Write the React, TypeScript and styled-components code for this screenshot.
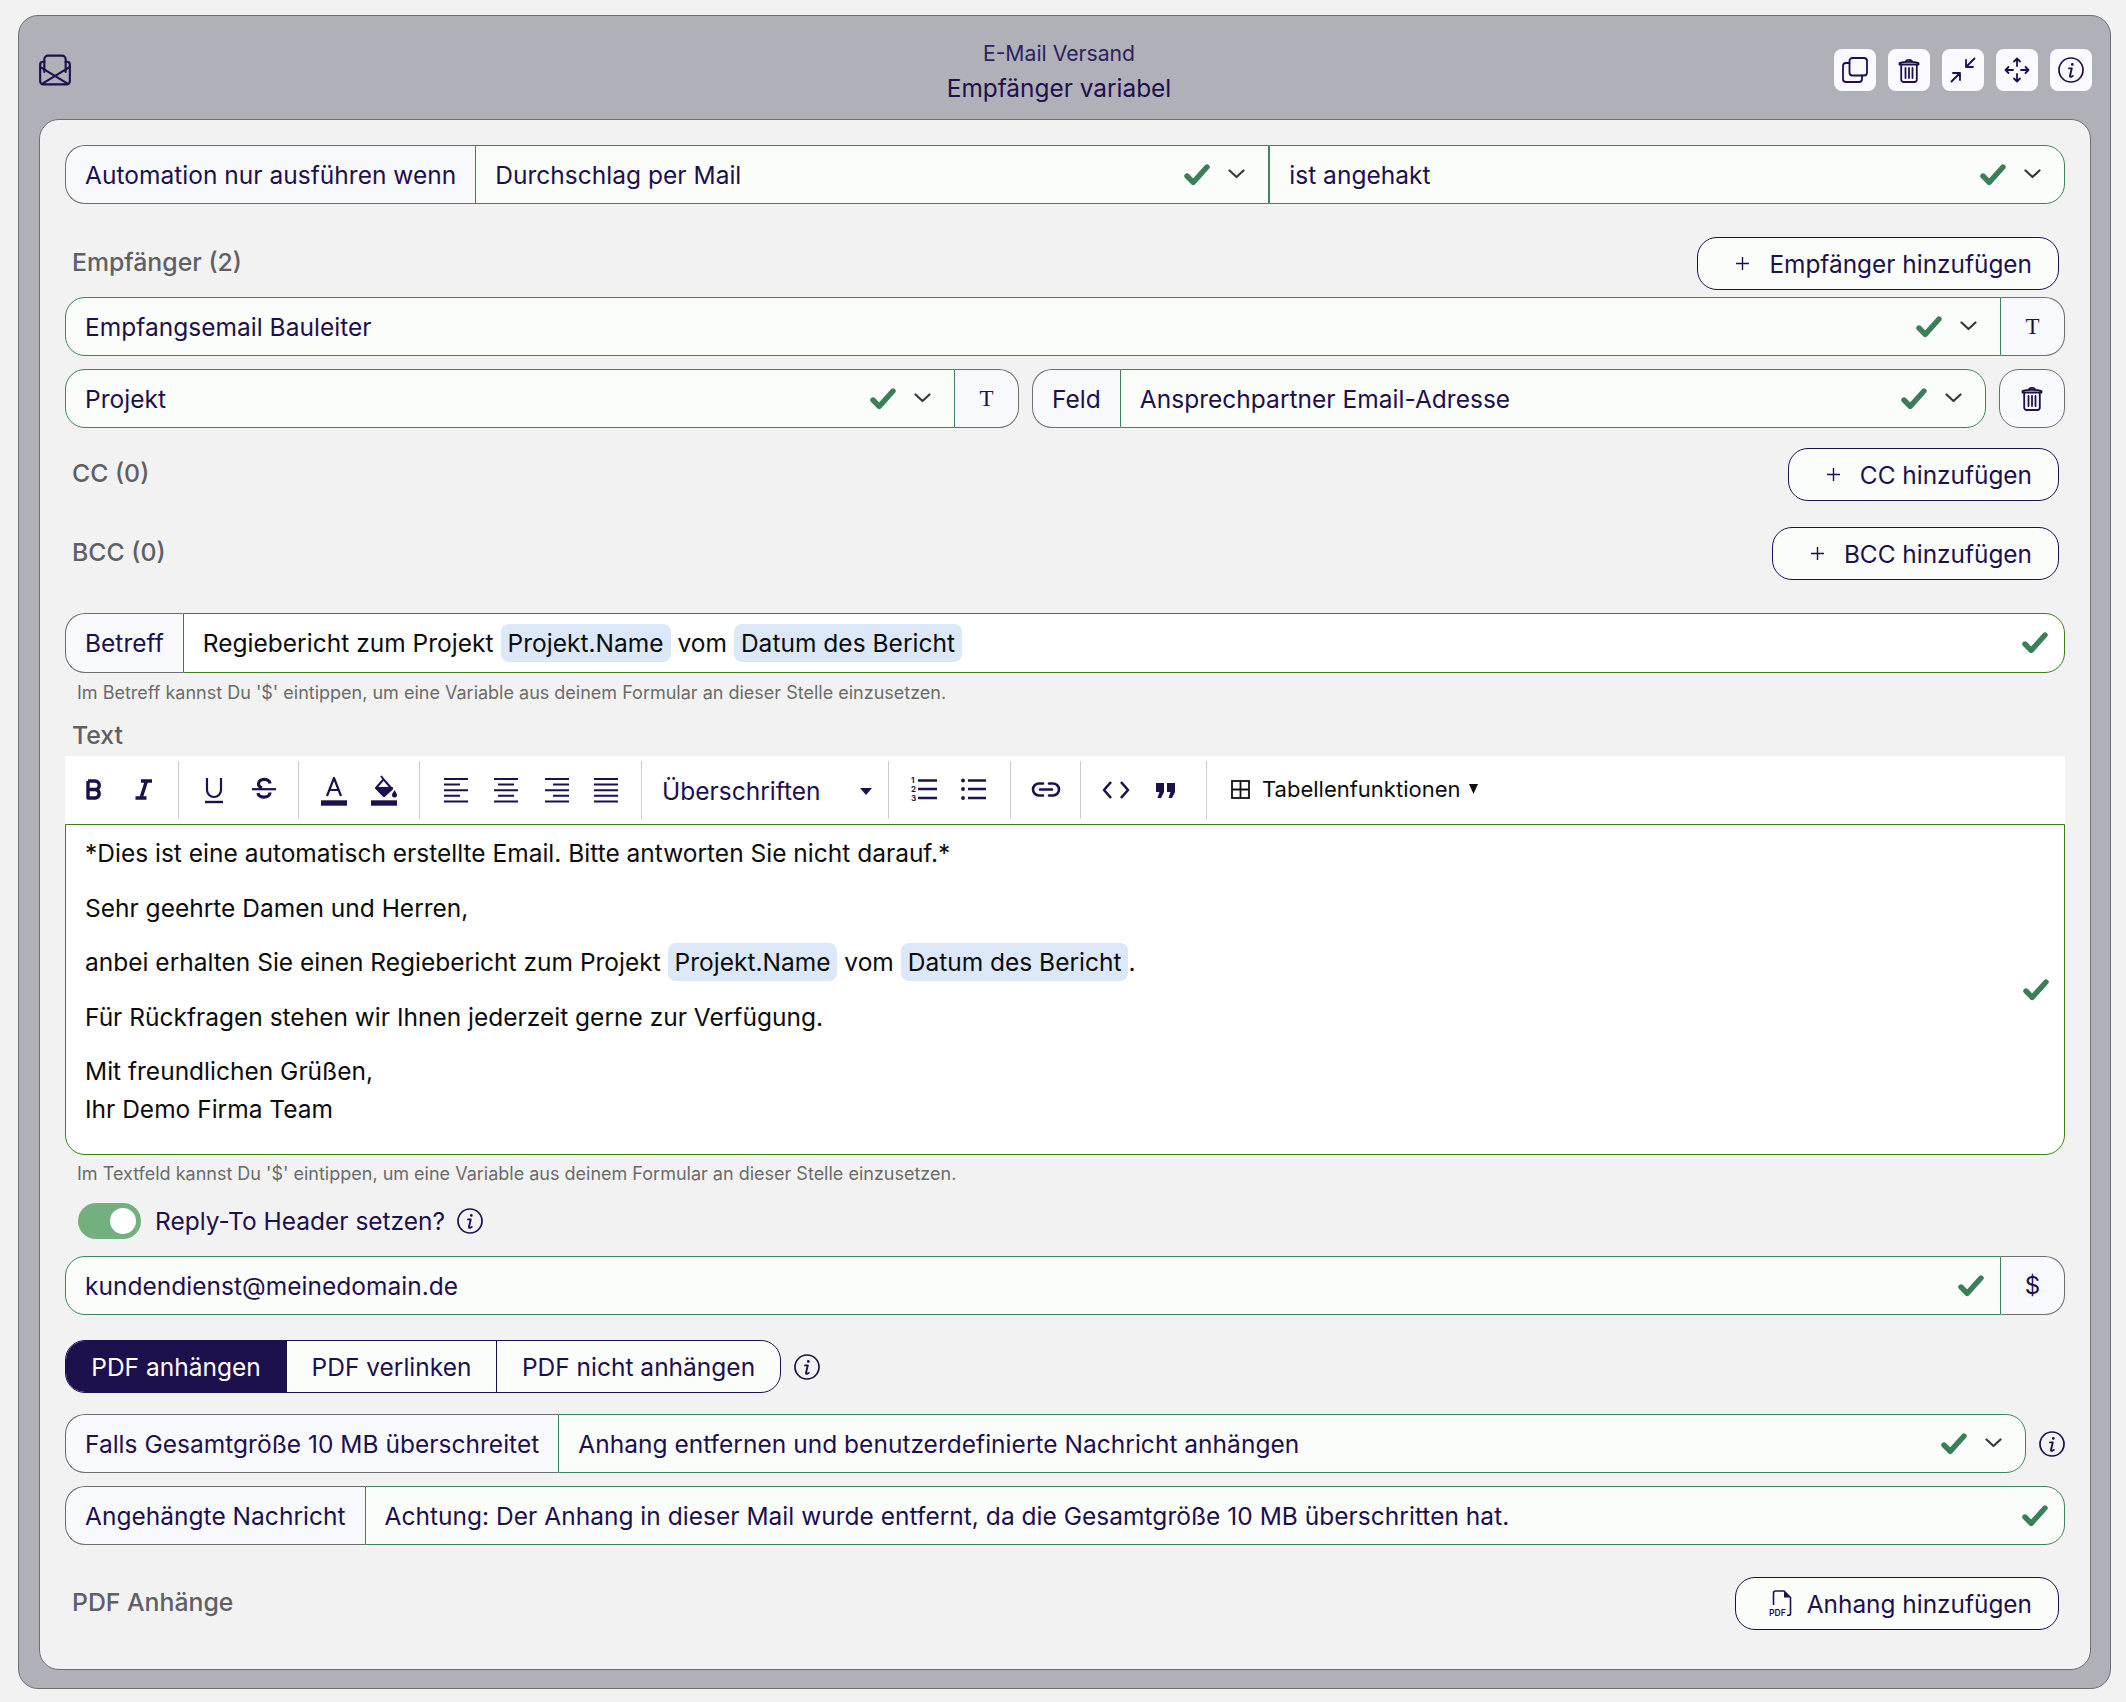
import React from "react";
import styled, { createGlobalStyle } from "styled-components";

const NAVY = "#1e0f4d";
const GREEN = "#3d8558";
const DEEP_GREEN = "#3c8018";
const GRAY = "#6e6e72";

const Global = createGlobalStyle`
  html, body { margin: 0; padding: 0; background: #f2f2f2; }
  body { font-family: Inter, "Liberation Sans", sans-serif; color: ${NAVY}; }
  * { box-sizing: border-box; }
`;

const Page = styled.div`
  width: 2126px;
  height: 1702px;
  padding: 15px 15px 13px 18px;
`;
const Outer = styled.div`
  height: 1674px;
  background: #b0b0b8;
  border: 1px solid ${GRAY};
  border-radius: 20px;
  padding: 0 19px 19px 20px;
`;
const Header = styled.header`
  height: 103px;
  display: grid;
  grid-template-columns: 1fr auto 1fr;
  align-items: center;
  padding-top: 5px;
`;
const Title = styled.div`
  text-align: center;
  margin-right: 12px;
`;
const TitleSmall = styled.div`
  font-size: 21.2px;
  line-height: 36px;
  color: #2d2160;
`;
const TitleBig = styled.div`
  font-size: 24.4px;
  line-height: 34px;
`;
const HeaderIcons = styled.div`
  display: flex;
  justify-content: flex-end;
  gap: 12px;
  margin-right: -1px;
`;
const IconBtn = styled.button`
  width: 42px;
  height: 42px;
  padding: 0;
  border: none;
  border-radius: 8px;
  background: #f9f9ff;
  display: flex;
  align-items: center;
  justify-content: center;
  color: ${NAVY};
`;
const Inner = styled.main`
  height: 1551px;
  background: #f2f2f2;
  border: 1px solid ${GRAY};
  border-radius: 20px;
  padding: 25px 25px 0;
`;
const Row = styled.div<{ $mt?: number }>`
  display: flex;
  gap: 13px;
  margin-top: ${(p) => p.$mt ?? 0}px;
  align-items: center;
`;
const Group = styled.div<{ $w?: number; $h?: number }>`
  display: flex;
  height: ${(p) => p.$h ?? 59}px;
  flex: ${(p) => (p.$w ? `0 0 ${p.$w}px` : "1 1 0")};
  min-width: 0;
  font-size: 24.5px;
  letter-spacing: 0.02px;
`;
const Label = styled.div`
  display: flex;
  align-items: center;
  flex: none;
  padding: 0 19px 0 19px;
  background: #f8f9fc;
  border: 1px solid ${GRAY};
  border-right: none;
  border-radius: 20px 0 0 20px;
`;
const Value = styled.div<{ $w?: number; $white?: boolean; $left?: boolean; $right?: boolean; $tight?: boolean }>`
  display: flex;
  align-items: center;
  flex: ${(p) => (p.$w ? `0 0 ${p.$w}px` : "1 1 0")};
  min-width: 0;
  padding: 0 ${(p) => (p.$tight ? 16 : 23)}px 0 19px;
  background: ${(p) => (p.$white ? "#fff" : "#fbfdfb")};
  color: ${(p) => (p.$white ? "#0c0c0c" : NAVY)};
  border: 1px solid ${(p) => (p.$white ? DEEP_GREEN : GREEN)};
  border-radius: ${(p) => (p.$left ? 20 : 0)}px ${(p) => (p.$right ? 20 : 0)}px
    ${(p) => (p.$right ? 20 : 0)}px ${(p) => (p.$left ? 20 : 0)}px;
`;
const ValueText = styled.span`
  flex: 1;
  white-space: nowrap;
`;
const Addon = styled.div<{ $serif?: boolean }>`
  flex: 0 0 64px;
  display: flex;
  align-items: center;
  justify-content: center;
  background: #f8f9fc;
  border: 1px solid ${GRAY};
  border-left: none;
  border-radius: 0 20px 20px 0;
  font-family: ${(p) => (p.$serif ? '"Liberation Serif", serif' : "inherit")};
  font-size: ${(p) => (p.$serif ? 23 : 24)}px;
`;
const SquareBtn = styled.button`
  flex: 0 0 66px;
  height: 59px;
  padding: 0;
  display: flex;
  align-items: center;
  justify-content: center;
  background: #f8f9fc;
  border: 1px solid ${GRAY};
  border-radius: 20px;
  color: ${NAVY};
`;
const SectionHead = styled.div<{ $mt: number }>`
  display: flex;
  justify-content: space-between;
  align-items: center;
  padding: 0 6px 0 7px;
  margin-top: ${(p) => p.$mt}px;
`;
const SectionLabel = styled.div`
  font-size: 24.8px;
  color: #5f6065;
  font-weight: 500;
  margin-top: -4px;
`;
const AddBtn = styled.button<{ $pl?: number; $gap?: number }>`
  height: 53px;
  display: flex;
  align-items: center;
  gap: ${(p) => p.$gap ?? 20}px;
  padding: 0 26px 0 ${(p) => p.$pl ?? 38}px;
  background: #fbfdfb;
  border: 1px solid ${NAVY};
  border-radius: 20px;
  color: ${NAVY};
  font: inherit;
  font-size: 24.4px;
`;
const Hint = styled.div<{ $mt: number }>`
  font-size: 18px;
  line-height: 22px;
  color: #6b6b6b;
  padding-left: 12px;
  margin-top: ${(p) => p.$mt}px;
`;
const TextLabel = styled(SectionLabel)`
  padding-left: 7px;
  margin-top: 16px;
  line-height: 30px;
`;
const Toolbar = styled.div`
  height: 68px;
  margin-top: 6px;
  background: #fff;
  display: flex;
  align-items: center;
`;
const ToolGroup = styled.div<{ $pl?: number; $pr?: number; $w?: number; $last?: boolean }>`
  height: 58px;
  display: flex;
  align-items: center;
  flex: none;
  padding: 0 ${(p) => p.$pr ?? 10}px 0 ${(p) => p.$pl ?? 10}px;
  border-right: ${(p) => (p.$last ? "none" : "1px solid #ccc")};
  ${(p) => (p.$w ? `width: ${p.$w}px;` : "")}
`;
const ToolBtn = styled.div`
  width: 50px;
  height: 50px;
  display: flex;
  align-items: center;
  justify-content: center;
  color: ${NAVY};
`;
const Heading = styled.div`
  flex: 1;
  display: flex;
  align-items: center;
  justify-content: space-between;
  font-size: 24.5px;
  margin-top: 2px;
  padding-right: 16px;
`;
const TableMenu = styled.div`
  display: flex;
  align-items: center;
  gap: 12px;
  color: #0c0c0c;
  font-size: 22px;
  margin-top: -2px;
`;
const Caret = styled.svg`
  margin-left: -3px;
`;
const Editor = styled.div`
  height: 331px;
  background: #fff;
  border: 1px solid ${DEEP_GREEN};
  border-radius: 0 0 20px 20px;
  padding: 0 15px 0 19px;
  display: flex;
  align-items: center;
  color: #0c0c0c;
  font-size: 24.5px;
`;
const EditorBody = styled.div`
  flex: 1;
  align-self: flex-start;
  padding-top: 9px;
`;
const Para = styled.p`
  margin: 0 0 16.5px;
  line-height: 38px;
`;
const Token = styled.span`
  display: inline-block;
  background: #dce8f8;
  border-radius: 8px;
  padding: 0 7px;
  line-height: 38px;
  height: 38px;
`;
const ToggleRow = styled.div`
  margin-top: 18px;
  padding-left: 13px;
  height: 36px;
  display: flex;
  align-items: center;
  font-size: 24.5px;
`;
const Toggle = styled.div`
  width: 63px;
  height: 36px;
  border-radius: 18px;
  background: #72b07e;
  padding: 5px 5px 5px 32px;
  margin-right: 14px;
`;
const Knob = styled.div`
  width: 26px;
  height: 26px;
  border-radius: 50%;
  background: #fff;
`;
const InfoGap = styled.div`
  margin-left: 12px;
  display: flex;
`;
const Radio = styled.div`
  display: flex;
  height: 53px;
  border: 1px solid ${NAVY};
  border-radius: 20px;
  background: #fbfdfb;
  overflow: hidden;
  font-size: 24.5px;
`;
const RadioItem = styled.div<{ $active?: boolean; $w: number }>`
  width: ${(p) => p.$w}px;
  display: flex;
  align-items: center;
  justify-content: center;
  background: ${(p) => (p.$active ? NAVY : "transparent")};
  color: ${(p) => (p.$active ? "#fff" : NAVY)};
  border-right: 1px solid ${NAVY};
  &:last-child { border-right: none; }
`;
const CheckSvg = styled.svg`
  flex: none;
`;
const ChevronSvg = styled.svg`
  flex: none;
  margin-left: 18px;
  margin-top: -2px;
`;
const PlainIcon = styled.svg`
  flex: none;
`;

const CheckIcon = () => (
  <CheckSvg width="26" height="22" viewBox="0 0 26 22" fill="none" stroke="#3a7f57" strokeWidth="5.4" strokeLinecap="round" strokeLinejoin="round">
    <path d="M3 12 L9.2 18.4 L23 3" />
  </CheckSvg>
);
const Chevron = () => (
  <ChevronSvg width="17" height="10" viewBox="0 0 17 10" fill="none" stroke="#37383c" strokeWidth="2.2" strokeLinecap="round" strokeLinejoin="round">
    <path d="M1.5 1.5 L8.5 8 L15.5 1.5" />
  </ChevronSvg>
);
const Trash = () => (
  <PlainIcon width="22" height="25" viewBox="0 0 22 25" fill="none" stroke={NAVY} strokeWidth="1.8" strokeLinecap="round" strokeLinejoin="round">
    <path d="M1.5 5 C5 3.6 17 3.6 20.5 5 V6.5 H1.5 Z" />
    <path d="M8 3.6 C8 1.2 14 1.2 14 3.6" />
    <path d="M3.2 6.5 V21.5 A2.5 2.5 0 0 0 5.7 24 H16.3 A2.5 2.5 0 0 0 18.8 21.5 V6.5" />
    <path d="M7.5 10 V20 M11 10 V20 M14.5 10 V20" />
  </PlainIcon>
);
const Info = () => (
  <PlainIcon width="26" height="26" viewBox="0 0 26 26" fill="none" stroke={NAVY} strokeWidth="1.7" strokeLinecap="round" strokeLinejoin="round">
    <circle cx="13" cy="13" r="12" />
    <path d="M11 11.4 H13.8 L12 18.8 C11.8 19.6 12.4 20 13 19.8 L14.8 19" strokeWidth="1.9" />
    <circle cx="14.3" cy="7.4" r="0.8" fill={NAVY} strokeWidth="1.2" />
  </PlainIcon>
);
const Envelope = () => (
  <PlainIcon width="32" height="32" viewBox="0 0 33 32" fill="none" stroke={NAVY} strokeWidth="2.2" strokeLinecap="round" strokeLinejoin="round">
    <path d="M5.5 7.5 H4 A3 3 0 0 0 1.2 10.5 V27.5 A3.3 3.3 0 0 0 4.5 30.8 H28.5 A3.3 3.3 0 0 0 31.8 27.5 V10.5 A3 3 0 0 0 29 7.5 H27.5" />
    <path d="M5.5 18 V5 A3.8 3.8 0 0 1 9.3 1.2 H23.7 A3.8 3.8 0 0 1 27.5 5 V18" />
    <path d="M1.5 13 L29.5 30 M31.5 13 L3.5 30" />
  </PlainIcon>
);
const CopyIcon = () => (
  <PlainIcon width="26" height="26" viewBox="0 0 26 26" fill="none" stroke={NAVY} strokeWidth="1.8" strokeLinejoin="round" strokeLinecap="round">
    <rect x="7.5" y="1" width="17.5" height="17.5" rx="3" />
    <path d="M7.5 6 H4 A3 3 0 0 0 1 9 V22 A3 3 0 0 0 4 25 H17 A3 3 0 0 0 20 22 V18.5" />
  </PlainIcon>
);
const CompressIcon = () => (
  <PlainIcon width="26" height="26" viewBox="0 0 26 26" fill="none" stroke={NAVY} strokeWidth="1.8" strokeLinecap="round" strokeLinejoin="round">
    <path d="M24.5 1.5 L16 10 M16 3 V10 H23" />
    <path d="M1.5 24.5 L10 16 M3 16 H10 V23" />
  </PlainIcon>
);
const MoveIcon = () => (
  <PlainIcon width="26" height="26" viewBox="0 0 26 26" fill="none" stroke={NAVY} strokeWidth="1.8" strokeLinecap="round" strokeLinejoin="round">
    <path d="M13 1.5 V9 M10 4.5 L13 1.5 L16 4.5" />
    <path d="M13 17 V24.5 M10 21.5 L13 24.5 L16 21.5" />
    <path d="M1.5 13 H9 M4.5 10 L1.5 13 L4.5 16" />
    <path d="M17 13 H24.5 M21.5 10 L24.5 13 L21.5 16" />
  </PlainIcon>
);
const Plus = () => (
  <PlainIcon width="13" height="13" viewBox="0 0 13 13" stroke={NAVY} strokeWidth="1.4" fill="none">
    <path d="M6.5 0 V13 M0 6.5 H13" />
  </PlainIcon>
);
const PdfIcon = () => (
  <PlainIcon width="23" height="27" viewBox="0 0 23 27" fill="none">
    <path d="M4.5 15 V3 A2 2 0 0 1 6.5 1 H15 L21.5 7.5 V23.5 A1.8 1.8 0 0 1 19.7 25.3 H18" stroke={NAVY} strokeWidth="1.6" />
    <path d="M15 1 L21.5 7.5 H15 Z" fill={NAVY} />
    <text x="0" y="26" fontFamily="Inter, sans-serif" fontSize="8.6" fontWeight="600" fill={NAVY}>PDF</text>
  </PlainIcon>
);

const Ico: React.FC<{ children: React.ReactNode; sw?: number }> = ({ children, sw = 2.2 }) => (
  <PlainIcon width="30" height="32" viewBox="0 0 30 32" fill="none" stroke={NAVY} strokeWidth={sw} strokeLinejoin="round">
    {children}
  </PlainIcon>
);

const Lines = ({ rows }: { rows: [number, number][] }) => (
  <Ico sw={2}>
    <path d={rows.map(([x, w], i) => `M${x} ${5 + i * 5.6} h${w}`).join(" ")} />
  </Ico>
);

export default function App() {
  return (
    <Page>
      <Global />
      <Outer>
        <Header>
          <Envelope />
          <Title>
            <TitleSmall>E-Mail Versand</TitleSmall>
            <TitleBig>Empfänger variabel</TitleBig>
          </Title>
          <HeaderIcons>
            <IconBtn><CopyIcon /></IconBtn>
            <IconBtn><Trash /></IconBtn>
            <IconBtn><CompressIcon /></IconBtn>
            <IconBtn><MoveIcon /></IconBtn>
            <IconBtn><Info /></IconBtn>
          </HeaderIcons>
        </Header>
        <Inner>
          <Row>
            <Group>
              <Label>Automation nur ausführen wenn</Label>
              <Value $w={794}>
                <ValueText>Durchschlag per Mail</ValueText>
                <CheckIcon /><Chevron />
              </Value>
              <Value $right>
                <ValueText>ist angehakt</ValueText>
                <CheckIcon /><Chevron />
              </Value>
            </Group>
          </Row>
          <SectionHead $mt={33}>
            <SectionLabel>Empfänger (2)</SectionLabel>
            <AddBtn><Plus />Empfänger hinzufügen</AddBtn>
          </SectionHead>
          <Row $mt={7}>
            <Group>
              <Value $left>
                <ValueText>Empfangsemail Bauleiter</ValueText>
                <CheckIcon /><Chevron />
              </Value>
              <Addon $serif>T</Addon>
            </Group>
          </Row>
          <Row $mt={13}>
            <Group $w={954}>
              <Value $left>
                <ValueText>Projekt</ValueText>
                <CheckIcon /><Chevron />
              </Value>
              <Addon $serif>T</Addon>
            </Group>
            <Group>
              <Label>Feld</Label>
              <Value $right>
                <ValueText>Ansprechpartner Email-Adresse</ValueText>
                <CheckIcon /><Chevron />
              </Value>
            </Group>
            <SquareBtn><Trash /></SquareBtn>
          </Row>
          <SectionHead $mt={20}>
            <SectionLabel>CC (0)</SectionLabel>
            <AddBtn><Plus />CC hinzufügen</AddBtn>
          </SectionHead>
          <SectionHead $mt={26}>
            <SectionLabel>BCC (0)</SectionLabel>
            <AddBtn><Plus />BCC hinzufügen</AddBtn>
          </SectionHead>
          <Row $mt={33}>
            <Group $h={60}>
              <Label>Betreff</Label>
              <Value $white $right $tight>
                <ValueText>Regiebericht zum Projekt <Token>Projekt.Name</Token> vom <Token>Datum des Bericht</Token></ValueText>
                <CheckIcon />
              </Value>
            </Group>
          </Row>
          <Hint $mt={9}>Im Betreff kannst Du '$' eintippen, um eine Variable aus deinem Formular an dieser Stelle einzusetzen.</Hint>
          <TextLabel>Text</TextLabel>
          <Toolbar>
            <ToolGroup $pl={4} $pr={9}>
              <ToolBtn><Ico sw={3.4}><path d="M9 7 V24 H16.5 A4.3 4.3 0 0 0 16.5 15.5 H9 M9 15.5 H16 A4.2 4.2 0 0 0 16 7 H9" /></Ico></ToolBtn>
              <ToolBtn><Ico sw={3.4}><path d="M12 7 H23 M6.5 24 H17.5 M17.5 7 L12 24" /></Ico></ToolBtn>
            </ToolGroup>
            <ToolGroup $pr={9}>
              <ToolBtn><Ico><path d="M8 4 V16 A7 7 0 0 0 22 16 V4" /><path d="M6 28 H24" strokeWidth="2.4" /></Ico></ToolBtn>
              <ToolBtn><Ico><path d="M21 9.5 C20.5 4 9.5 4 9.5 10 C9.5 12.5 11.5 13.5 13 14 M21 18.5 C21 24.5 9.5 24.5 9 19" strokeWidth="3.2" /><path d="M3 15.2 H27" strokeWidth="2.2" /></Ico></ToolBtn>
            </ToolGroup>
            <ToolGroup $pr={10}>
              <ToolBtn><Ico><path d="M8 22 L15 4 L22 22 M10.5 16 H19.5" /><path d="M2 29 H28" strokeWidth="5.4" /></Ico></ToolBtn>
              <ToolBtn>
                <Ico sw={2}>
                  <path d="M12 2 L16 7 L23 15 L15 22 L7 14 L14 6" />
                  <path d="M7.5 14 H23 L15 22 Z" fill={NAVY} />
                  <path d="M25.5 16 C27 18.5 28 19.5 28 21 A2.5 2.5 0 0 1 23 21 C23 19.5 24 18.5 25.5 16 Z" fill={NAVY} stroke="none" />
                  <path d="M2 29 H28" strokeWidth="5.4" />
                </Ico>
              </ToolBtn>
            </ToolGroup>
            <ToolGroup $pr={11}>
              <ToolBtn><Lines rows={[[4, 24], [4, 16], [4, 24], [4, 16], [4, 24]]} /></ToolBtn>
              <ToolBtn><Lines rows={[[4, 24], [8, 16], [4, 24], [8, 16], [4, 24]]} /></ToolBtn>
              <ToolBtn><Lines rows={[[5, 24], [13, 16], [5, 24], [13, 16], [5, 24]]} /></ToolBtn>
              <ToolBtn><Lines rows={[[4, 24], [4, 24], [4, 24], [4, 24], [4, 24]]} /></ToolBtn>
            </ToolGroup>
            <ToolGroup $pl={20} $pr={0} $w={247}>
              <Heading>
                Überschriften
                <svg width="12" height="7" viewBox="0 0 12 7"><path d="M0 0 H12 L6 7 Z" fill={NAVY} /></svg>
              </Heading>
            </ToolGroup>
            <ToolGroup $pr={11}>
              <ToolBtn>
                <Ico>
                  <path d="M9 6.5 H28 M9 15 H28 M9 24 H28" strokeWidth="2.6" />
                  <text x="2" y="9" fontSize="8" fontFamily="Inter, sans-serif" fontWeight="700" fill={NAVY} stroke="none">1</text>
                  <text x="2" y="18" fontSize="8" fontFamily="Inter, sans-serif" fontWeight="700" fill={NAVY} stroke="none">2</text>
                  <text x="2" y="27" fontSize="8" fontFamily="Inter, sans-serif" fontWeight="700" fill={NAVY} stroke="none">3</text>
                </Ico>
              </ToolBtn>
              <ToolBtn>
                <Ico>
                  <path d="M9 6.5 H27 M9 15 H27 M9 24 H27" strokeWidth="2.6" />
                  <circle cx="4" cy="6.5" r="1.9" fill={NAVY} stroke="none" />
                  <circle cx="4" cy="15" r="1.9" fill={NAVY} stroke="none" />
                  <circle cx="4" cy="24" r="1.9" fill={NAVY} stroke="none" />
                </Ico>
              </ToolBtn>
            </ToolGroup>
            <ToolGroup $pr={9}>
              <ToolBtn>
                <Ico sw={2.6}><path d="M12 9.5 H8 A6 6 0 0 0 8 21.5 H12 M18 9.5 H22 A6 6 0 0 1 22 21.5 H18 M9 15.5 H21" strokeLinecap="round" /></Ico>
              </ToolBtn>
            </ToolGroup>
            <ToolGroup $pr={15}>
              <ToolBtn><Ico sw={2.6}><path d="M10 8 L3 16 L10 24 M20 8 L27 16 L20 24" /></Ico></ToolBtn>
              <ToolBtn>
                <Ico sw={0}>
                  <path d="M5 9 H13 V18 L10 24 H6.5 L8.5 18 H5 Z M16 9 H24 V18 L21 24 H17.5 L19.5 18 H16 Z" fill={NAVY} stroke="none" />
                </Ico>
              </ToolBtn>
            </ToolGroup>
            <ToolGroup $last $pl={24}>
              <TableMenu>
                <svg width="19" height="19" viewBox="0 0 19 19" fill="none" stroke="#111" strokeWidth="1.8"><rect x="1" y="1" width="17" height="17" /><path d="M9.5 1 V18 M1 9.5 H18" /></svg>
                <span>Tabellenfunktionen</span>
                <Caret width="9" height="10" viewBox="0 0 9 10"><path d="M0 0 H9 L4.5 10 Z" fill="#111" /></Caret>
              </TableMenu>
            </ToolGroup>
          </Toolbar>
          <Editor>
            <EditorBody>
              <Para>*Dies ist eine automatisch erstellte Email. Bitte antworten Sie nicht darauf.*</Para>
              <Para>Sehr geehrte Damen und Herren,</Para>
              <Para>anbei erhalten Sie einen Regiebericht zum Projekt <Token>Projekt.Name</Token> vom <Token>Datum des Bericht</Token>.</Para>
              <Para>Für Rückfragen stehen wir Ihnen jederzeit gerne zur Verfügung.</Para>
              <Para>Mit freundlichen Grüßen,<br />Ihr Demo Firma Team</Para>
            </EditorBody>
            <CheckIcon />
          </Editor>
          <Hint $mt={8}>Im Textfeld kannst Du '$' eintippen, um eine Variable aus deinem Formular an dieser Stelle einzusetzen.</Hint>
          <ToggleRow>
            <Toggle><Knob /></Toggle>
            Reply-To Header setzen?
            <InfoGap><Info /></InfoGap>
          </ToggleRow>
          <Row $mt={17}>
            <Group>
              <Value $left $tight>
                <ValueText>kundendienst@meinedomain.de</ValueText>
                <CheckIcon />
              </Value>
              <Addon>$</Addon>
            </Group>
          </Row>
          <Row $mt={25}>
            <Radio>
              <RadioItem $active $w={221}>PDF anhängen</RadioItem>
              <RadioItem $w={210}>PDF verlinken</RadioItem>
              <RadioItem $w={283}>PDF nicht anhängen</RadioItem>
            </Radio>
            <Info />
          </Row>
          <Row $mt={21}>
            <Group>
              <Label>Falls Gesamtgröße 10 MB überschreitet</Label>
              <Value $right>
                <ValueText>Anhang entfernen und benutzerdefinierte Nachricht anhängen</ValueText>
                <CheckIcon /><Chevron />
              </Value>
            </Group>
            <Info />
          </Row>
          <Row $mt={13}>
            <Group>
              <Label>Angehängte Nachricht</Label>
              <Value $right $tight>
                <ValueText>Achtung: Der Anhang in dieser Mail wurde entfernt, da die Gesamtgröße 10 MB überschritten hat.</ValueText>
                <CheckIcon />
              </Value>
            </Group>
          </Row>
          <SectionHead $mt={32}>
            <SectionLabel>PDF Anhänge</SectionLabel>
            <AddBtn $pl={33} $gap={15}><PdfIcon />Anhang hinzufügen</AddBtn>
          </SectionHead>
        </Inner>
      </Outer>
    </Page>
  );
}
